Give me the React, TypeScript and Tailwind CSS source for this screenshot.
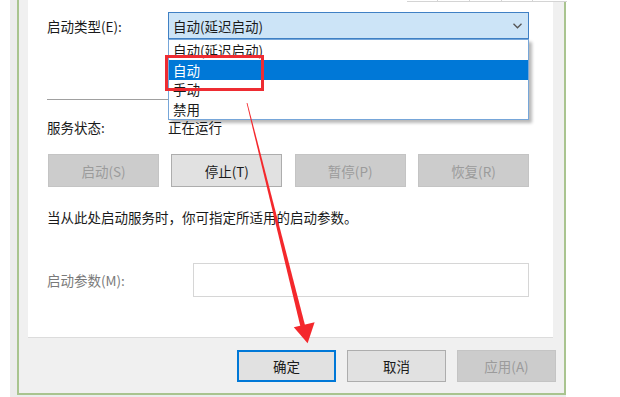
import React from "react";

const Btn: React.FC<{ label: string; w: string; h: string; kind?: "normal" | "disabled" | "default" }> = ({
    label,
    w,
    h,
    kind = "normal",
}) => {
    const look =
        kind === "disabled"
            ? "bg-[#cccccc] border border-[#c4c4c4] text-[#9b9b9b]"
            : kind === "default"
              ? "bg-[#e1e1e1] border-2 border-[#0078d7] text-[#1a1a1a]"
              : "bg-[#e1e1e1] border border-[#adadad] text-[#1a1a1a]";
    return <div className={`${w} ${h} ${look} flex items-center justify-center leading-[20px]`}>{label}</div>;
};

const options = ["自动(延迟启动)", "自动", "手动", "禁用"];

const App: React.FC = () => {
    return (
        <div className="relative w-[620px] h-[397px] bg-white overflow-hidden font-['Noto_Sans_CJK_SC',sans-serif] text-[13.5px] text-[#1a1a1a]">
            <div className="ml-[10px] w-[556px] h-[397px] bg-[#ececec] pl-[7px]">
                <div className="w-[549px] h-[395px] bg-[#f0f0f0] border-x-2 border-b-2 border-[#a9c48f] flex flex-col">
                    {/* property page */}
                    <div className="ml-[9px] mr-[11px] h-[338px] bg-white border-b border-[#dcdcdc] pt-[12px] pl-[19px] pr-[24px] flex flex-col">
                        <div className="flex items-center h-[27px]">
                            <div className="w-[121px] leading-[20px]">启动类型(E):</div>
                            <div className="relative flex-1 h-[27px]">
                                <div className="h-full bg-[#cce4f7] border border-[#3f80c4] flex items-center justify-between pl-[4px] pr-[6px]">
                                    <span className="leading-[20px]">自动(延迟启动)</span>
                                    <svg width="9" height="6" viewBox="0 0 9 6">
                                        <polyline points="0.5,0.8 4.5,4.8 8.5,0.8" fill="none" stroke="#555" strokeWidth="1.3" />
                                    </svg>
                                </div>
                                <div className="absolute left-0 top-[27px] w-full h-[81px] bg-white border border-[#76a6d9] shadow-[3px_3px_3px_rgba(0,0,0,0.28)] flex flex-col">
                                    {options.map((o, i) => (
                                        <div
                                            key={o}
                                            className={`h-[20px] pl-[4px] flex items-center leading-[18px] ${
                                                i === 1 ? "bg-[#0078d7] text-white" : ""
                                            }`}
                                        >
                                            {o}
                                        </div>
                                    ))}
                                </div>
                            </div>
                        </div>

                        <div className="mt-[60px] h-px bg-[#a0a0a0]" />

                        <div className="mt-[20px] flex leading-[14px]">
                            <div className="w-[121px]">服务状态:</div>
                            <div>正在运行</div>
                        </div>

                        <div className="mt-[20px] pl-[1px] flex justify-between">
                            <Btn label="启动(S)" w="w-[111px]" h="h-[33px]" kind="disabled" />
                            <Btn label="停止(T)" w="w-[111px]" h="h-[33px]" />
                            <Btn label="暂停(P)" w="w-[111px]" h="h-[33px]" kind="disabled" />
                            <Btn label="恢复(R)" w="w-[111px]" h="h-[33px]" kind="disabled" />
                        </div>

                        <div className="mt-[20px] leading-[20px]">当从此处启动服务时，你可指定所适用的启动参数。</div>

                        <div className="mt-[36px] flex items-center">
                            <div className="w-[146px] leading-[20px] text-[#7a7a7a]">启动参数(M):</div>
                            <div className="flex-1 h-[34px] bg-white border border-[#d6d6d6]" />
                        </div>
                    </div>

                    {/* dialog buttons */}
                    <div className="mt-[12px] pr-[8px] flex justify-end gap-[11px]">
                        <Btn label="确定" w="w-[99px]" h="h-[32px]" kind="default" />
                        <Btn label="取消" w="w-[99px]" h="h-[32px]" />
                        <Btn label="应用(A)" w="w-[99px]" h="h-[32px]" kind="disabled" />
                    </div>
                </div>
            </div>

            {/* strip of the window behind */}
            <div className="absolute left-[407px] top-0 w-[160px] h-[2px] bg-white border-b border-[#d4d4d4] flex">
                <div className="w-[31px] border-r border-[#d4d4d4]" />
                <div className="w-[32px] border-r border-[#d4d4d4]" />
                <div className="w-[32px] border-r border-[#d4d4d4]" />
                <div className="w-[31px] border-r border-[#d4d4d4]" />
            </div>

            {/* annotation: red box */}
            <div className="absolute left-[165px] top-[55px] w-[99px] h-[36px] border-[3px] border-[#ee2c32]" />

            {/* annotation: red arrow */}
            <svg className="absolute left-0 top-0" width="620" height="397" viewBox="0 0 620 397">
                <polygon points="246.6,103.1 247.4,102.9 305.6,327.4 300.9,328.6" fill="#f4282c" />
                <polygon points="293.8,327.2 314.6,322.3 307.6,343.2" fill="#f4282c" />
            </svg>
        </div>
    );
};

export default App;
